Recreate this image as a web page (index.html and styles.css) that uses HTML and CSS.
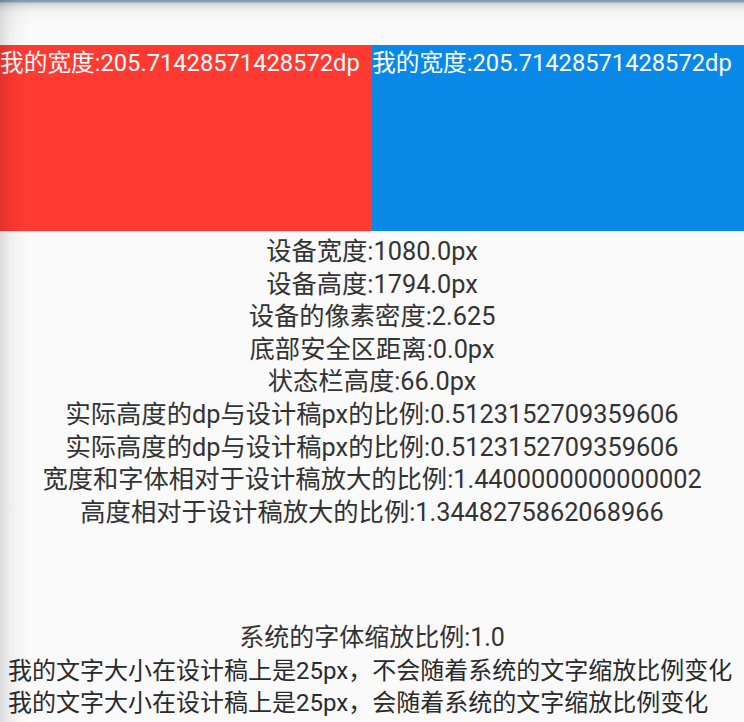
FILE: index.html
```html
<!DOCTYPE html>
<html lang="zh-CN">
<head>
<meta charset="utf-8">
<title>屏幕适配</title>
<link rel="stylesheet" href="styles.css">
</head>
<body>
<div class="screen">
  <div class="topbar"></div>
  <div class="boxes">
    <div class="box box-red">我的宽度:205.71428571428572dp</div>
    <div class="box box-blue">我的宽度:205.71428571428572dp</div>
  </div>
  <div class="info">
    <div class="line">设备宽度:1080.0px</div>
    <div class="line">设备高度:1794.0px</div>
    <div class="line">设备的像素密度:2.625</div>
    <div class="line">底部安全区距离:0.0px</div>
    <div class="line">状态栏高度:66.0px</div>
    <div class="line">实际高度的dp与设计稿px的比例:0.5123152709359606</div>
    <div class="line">实际高度的dp与设计稿px的比例:0.5123152709359606</div>
    <div class="line">宽度和字体相对于设计稿放大的比例:1.4400000000000002</div>
    <div class="line">高度相对于设计稿放大的比例:1.3448275862068966</div>
  </div>
  <div class="scale">
    <div class="sline sline-center">系统的字体缩放比例:1.0</div>
    <div class="sline">我的文字大小在设计稿上是25px<span class="comma">，</span>不会随着系统的文字缩放比例变化</div>
    <div class="sline">我的文字大小在设计稿上是25px<span class="comma">，</span>会随着系统的文字缩放比例变化</div>
  </div>
  <div class="edge-shadow"></div>
</div>
</body>
</html>
```
FILE: styles.css
```css
html, body {
  margin: 0;
  padding: 0;
  background: #fafafa;
}

.screen {
  position: relative;
  width: 744px;
  height: 722px;
  overflow: hidden;
  background: #fafafa;
  font-family: Roboto, "Noto Sans CJK SC", sans-serif;
}

.topbar {
  height: 45px;
  background: linear-gradient(to bottom, #7f97b5 0px, #8ea0b6 2px, #cfcfcf 3px, #e6e6e6 7px, #f3f3f3 12px, #f8f8f8 18px, #fafafa 30px);
}

.boxes {
  display: flex;
  height: 186px;
}

.box {
  flex: 1;
  color: #fff;
  font-size: 23.7px;
  line-height: 37px;
  white-space: nowrap;
}

.box-red {
  background: #ff3a33;
}

.box-blue {
  background: #0a88e8;
}

.info {
  display: flex;
  flex-direction: column;
  align-items: center;
  padding-top: 5px;
  color: #333333;
  font-size: 25.3px;
  line-height: 32.6px;
}

.line {
  white-space: nowrap;
}

.scale {
  display: flex;
  flex-direction: column;
  padding-top: 94px;
  padding-left: 8px;
  color: #2a2a2a;
  font-size: 24px;
  line-height: 30.5px;
}

.sline {
  white-space: nowrap;
}

.sline-center {
  align-self: center;
  margin-left: -8px;
  color: #333333;
  font-size: 25px;
}

.comma {
  font-family: "Noto Sans CJK TC", sans-serif;
}

.edge-shadow {
  position: absolute;
  top: 0;
  left: 0;
  bottom: 0;
  width: 28px;
  pointer-events: none;
  background: linear-gradient(to right, rgba(0,0,0,0.12), rgba(0,0,0,0.05) 10px, rgba(0,0,0,0.015) 20px, rgba(0,0,0,0));
}
```
